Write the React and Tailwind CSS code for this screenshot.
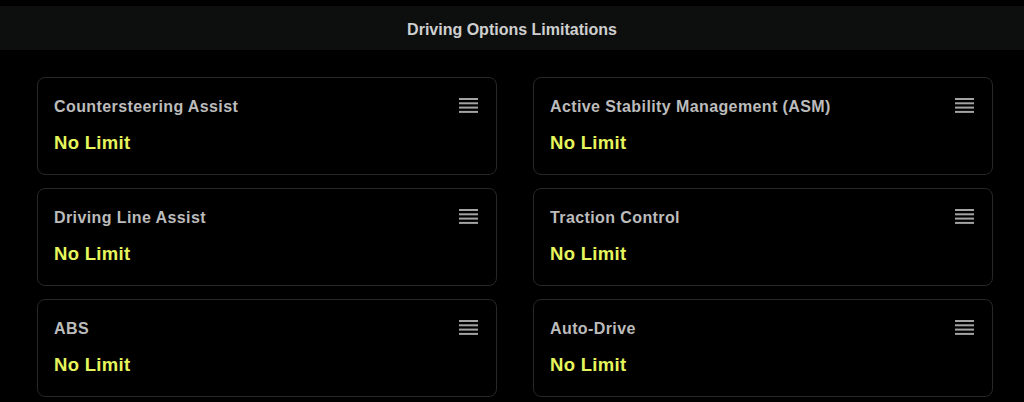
const options = [
  "Countersteering Assist",
  "Active Stability Management (ASM)",
  "Driving Line Assist",
  "Traction Control",
  "ABS",
  "Auto-Drive",
];

const MenuIcon = () => (
  <svg width="19" height="16" viewBox="0 0 19 16" className="shrink-0">
    <rect x="0" y="0" width="19" height="2" fill="#a3a3a3" />
    <rect x="0" y="4.3" width="19" height="2" fill="#a3a3a3" />
    <rect x="0" y="8.6" width="19" height="2" fill="#a3a3a3" />
    <rect x="0" y="12.9" width="19" height="2" fill="#a3a3a3" />
  </svg>
);

const OptionCard = ({ title }) => (
  <div className="h-[98px] rounded-lg border border-[#262727] bg-black pl-[16px] pr-[18px] pt-[18px]">
    <div className="flex items-start justify-between">
      <span className="text-[16px] font-bold leading-[22px] tracking-[0.4px] text-[#bcbcbc]">{title}</span>
      <div className="pt-[2px]">
        <MenuIcon />
      </div>
    </div>
    <div className="mt-[14px] text-[18.5px] font-bold leading-[22px] tracking-[0.3px] text-[#e6f55c]">No Limit</div>
  </div>
);

export default function App() {
  return (
    <div
      className="h-[402px] w-[1024px] overflow-hidden bg-black"
      style={{ fontFamily: '"Liberation Sans", Arial, sans-serif' }}
    >
      <div className="pt-[6px]">
        <div className="flex h-[44px] items-center justify-center bg-[#0d0f0f] pt-[3px]">
          <span className="text-[16px] font-bold text-[#cfcfcf]">
            Driving Options Limitations
          </span>
        </div>
      </div>
      <div className="grid grid-cols-2 gap-x-[36px] gap-y-[13px] pl-[37px] pr-[31px] pt-[27px]">
        {options.map((o) => (
          <OptionCard key={o} title={o} />
        ))}
      </div>
    </div>
  );
}
